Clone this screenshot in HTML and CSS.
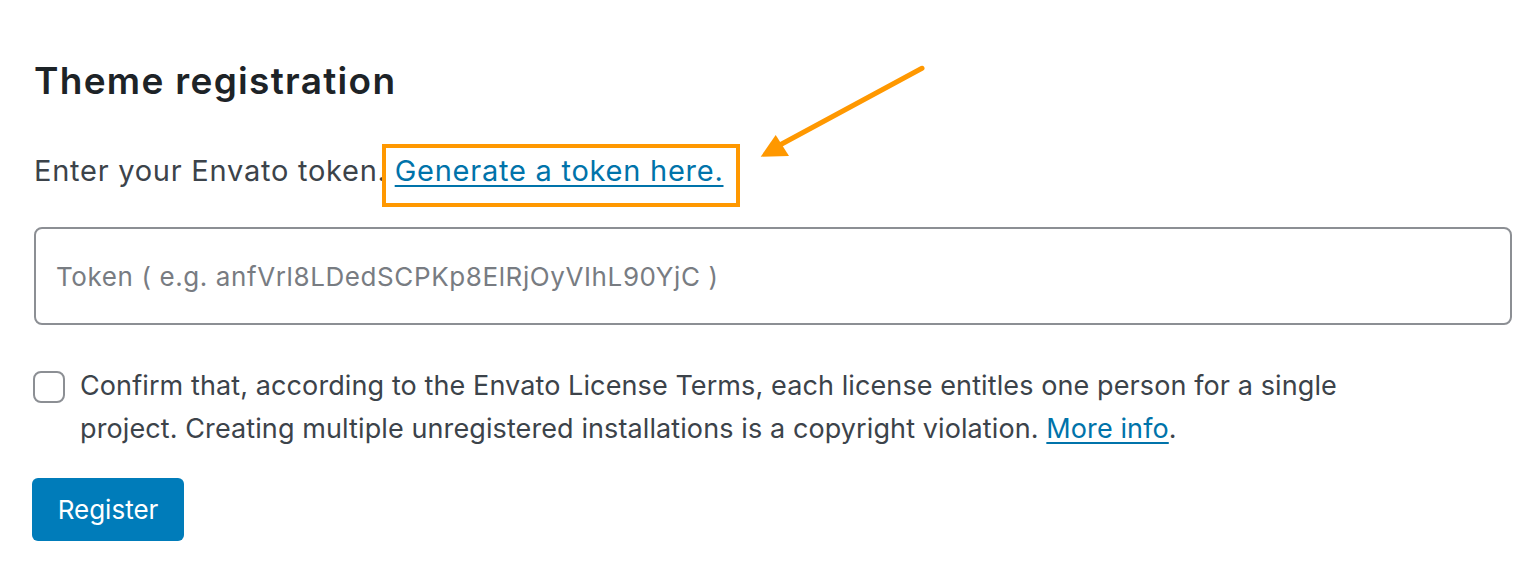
FILE: index.html
```html
<!DOCTYPE html>
<html>
<head>
<meta charset="utf-8">
<link rel="stylesheet" href="styles.css">
</head>
<body>
<div class="page">
  <h2 class="title">Theme registration</h2>
  <p class="intro"><span>Enter your Envato token.</span><span class="highlight"><a href="#" class="link">Generate a token here.</a></span></p>
  <input class="token" type="text" placeholder="Token ( e.g. anfVrl8LDedSCPKp8ElRjOyVIhL90YjC )">
  <label class="confirm">
    <span class="box"></span>
    <span class="confirm-text">Confirm that, according to the Envato License Terms, each license entitles one person for a single project. Creating multiple unregistered installations is a copyright violation. <a href="#" class="link">More info</a>.</span>
  </label>
  <button class="btn">Register</button>
  <svg class="arrow" width="200" height="120" viewBox="0 0 200 120">
    <line x1="182" y1="13.3" x2="38" y2="91" stroke="#ff9800" stroke-width="5" stroke-linecap="round"/>
    <polygon points="20.7,101.7 35.7,80 49,101" fill="#ff9800"/>
  </svg>
</div>
</body>
</html>
```
FILE: styles.css
```css
html, body {
  margin: 0;
  padding: 0;
  background: #fff;
}
.page {
  position: relative;
  padding: 59px 22px 0 34px;
  font-family: Inter, "Noto Sans", sans-serif;
  color: #3c434a;
}
.title {
  margin: 0;
  font-size: 37px;
  line-height: 44px;
  font-weight: 600;
  color: #1d2327;
  letter-spacing: 1.3px;
}
.intro {
  margin: 41px 0 0 0;
  font-size: 29px;
  line-height: 29px;
  letter-spacing: 0.75px;
  display: flex;
  align-items: baseline;
}
.highlight {
  display: inline-block;
  border: 4px solid #ff9800;
  padding: 8px 12px 18px 9px;
  margin-left: -5px;
}
.link {
  color: #0073aa;
  text-decoration: underline;
  text-underline-offset: 4px;
  text-decoration-thickness: 2px;
}
.token {
  display: block;
  box-sizing: border-box;
  width: 100%;
  height: 98px;
  margin-top: 20px;
  border: 2px solid #8c8f94;
  border-radius: 8px;
  padding: 0 20px;
  font-family: Inter, "Noto Sans", sans-serif;
  font-size: 26px;
  letter-spacing: 0.6px;
  color: #2c3338;
  outline: none;
}
.token::placeholder {
  color: #787c82;
}
.confirm {
  display: flex;
  align-items: flex-start;
  margin-top: 39px;
  font-size: 27px;
  line-height: 43px;
  letter-spacing: 0.1px;
}
.box {
  flex: none;
  box-sizing: border-box;
  width: 32px;
  height: 32px;
  border: 2px solid #8c8f94;
  border-radius: 8px;
  margin: 7px 15px 0 -1px;
}
.confirm-text {
  max-width: 1300px;
}
.btn {
  display: block;
  margin-top: 28px;
  margin-left: -2px;
  width: 152px;
  height: 63px;
  border: none;
  border-radius: 6px;
  background: #007cba;
  color: #fff;
  font-family: Inter, "Noto Sans", sans-serif;
  font-size: 26px;
}
.arrow {
  position: absolute;
  left: 740px;
  top: 55px;
}
```
